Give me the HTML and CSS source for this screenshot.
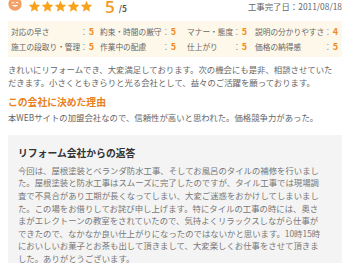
FILE: index.html
```html
<!DOCTYPE html>
<html lang="ja">
<head>
    <meta charset="UTF-8">
    <meta name="viewport" content="width=device-width, initial-scale=1.0">
    <title>口コミ</title>
    <link rel="stylesheet" href="styles.css">
</head>
<body>
    <div class="review">
        <div class="head">
            <div class="score">
                <svg class="face" viewBox="0 0 20 20">
                    <circle cx="10" cy="10" r="9.5" fill="#f3a066"/>
                    <path d="M5.5 8.2 Q7 6.6 8.5 8.2" stroke="#fff" stroke-width="1.4" fill="none" stroke-linecap="round"/>
                    <path d="M11.5 8.2 Q13 6.6 14.5 8.2" stroke="#fff" stroke-width="1.4" fill="none" stroke-linecap="round"/>
                    <path d="M5.5 11.5 Q10 16.5 14.5 11.5 Z" fill="#fff"/>
                </svg>
                <span class="stars">
                    <svg viewBox="0 0 24 24"><polygon points="12,1.5 15.1,8.3 22.5,9.1 17,14.1 18.6,21.5 12,17.7 5.4,21.5 7,14.1 1.5,9.1 8.9,8.3"/></svg>
                    <svg viewBox="0 0 24 24"><polygon points="12,1.5 15.1,8.3 22.5,9.1 17,14.1 18.6,21.5 12,17.7 5.4,21.5 7,14.1 1.5,9.1 8.9,8.3"/></svg>
                    <svg viewBox="0 0 24 24"><polygon points="12,1.5 15.1,8.3 22.5,9.1 17,14.1 18.6,21.5 12,17.7 5.4,21.5 7,14.1 1.5,9.1 8.9,8.3"/></svg>
                    <svg viewBox="0 0 24 24"><polygon points="12,1.5 15.1,8.3 22.5,9.1 17,14.1 18.6,21.5 12,17.7 5.4,21.5 7,14.1 1.5,9.1 8.9,8.3"/></svg>
                    <svg viewBox="0 0 24 24"><polygon points="12,1.5 15.1,8.3 22.5,9.1 17,14.1 18.6,21.5 12,17.7 5.4,21.5 7,14.1 1.5,9.1 8.9,8.3"/></svg>
                </span>
                <span class="num">5</span><span class="max">/5</span>
            </div>
            <div class="date">工事完了日：2011/08/18</div>
        </div>

        <div class="rates">
            <span class="lbl">対応の早さ</span><span class="val">：<b>5</b></span>
            <span class="lbl">約束・時間の厳守</span><span class="val">：<b>5</b></span>
            <span class="lbl">マナー・態度</span><span class="val">：<b>5</b></span>
            <span class="lbl">説明の分かりやすさ</span><span class="val">：<b>4</b></span>
            <span class="lbl">施工の段取り・管理</span><span class="val">：<b>5</b></span>
            <span class="lbl">作業中の配慮</span><span class="val">：<b>5</b></span>
            <span class="lbl">仕上がり</span><span class="val">：<b>5</b></span>
            <span class="lbl">価格の納得感</span><span class="val">：<b>5</b></span>
        </div>

        <p class="comment">きれいにリフォームでき、大変満足しております。次の機会にも是非、相談させていただきます。小さくともきらりと光る会社として、益々のご活躍を願っております。</p>

        <h3 class="reason-title">この会社に決めた理由</h3>
        <p class="reason">本WEBサイトの加盟会社なので、信頼性が高いと思われた。価格競争力があった。</p>

        <div class="reply">
            <h3>リフォーム会社からの返答</h3>
            <p>今回は、屋根塗装とベランダ防水工事、そしてお風呂のタイルの補修を行いました。屋根塗装と防水工事はスムーズに完了したのですが、タイル工事では現場調査で不具合があり工期が長くなってしまい、大変ご迷惑をおかけしてしまいました。この場をお借りしてお詫び申し上げます。特にタイルの工事の時には、奥さまがエレクトーンの教室をされていたので、気持よくリラックスしながら仕事ができたので、なかなか良い仕上がりになったのではないかと思います。10時15時においしいお菓子とお茶も出して頂きまして、大変楽しくお仕事をさせて頂きました。ありがとうございます。</p>
        </div>
    </div>
</body>
</html>
```

FILE: styles.css
```css
* {
    margin: 0;
    padding: 0;
    box-sizing: border-box;
}

body {
    font-family: 'Noto Sans CJK JP', 'Noto Sans', sans-serif;
    background: #fff;
    color: #666;
    font-size: 8.4px;
    line-height: 12.6px;
}

.review {
    width: 350px;
    padding: 0 8px;
}

/* 評価ヘッダー */
.head {
    display: flex;
    align-items: center;
    justify-content: space-between;
    height: 12px;
}

.score {
    display: flex;
    align-items: center;
}

.face {
    width: 14px;
    height: 14px;
    margin-top: -5px;
}

.stars {
    display: flex;
    margin-left: 6px;
}

.stars svg {
    width: 13px;
    height: 13px;
    fill: #f6a31d;
}

.num {
    margin-left: 12px;
    font-size: 17px;
    line-height: 13px;
    color: #f39a22;
    font-family: 'Open Sans', sans-serif;
    font-weight: 600;
}

.max {
    margin-left: 4px;
    margin-top: 4px;
    font-size: 8.4px;
    color: #555;
    font-weight: bold;
}

.date {
    color: #666;
}

/* 項目別評価 */
.rates {
    margin-top: 9px;
    background: #fef8ea;
    padding: 4px 0 4px 3px;
    display: grid;
    grid-template-columns: 69px 20px 62px 25px 46px 22px 69px 14px;
    row-gap: 2px;
    font-size: 7.7px;
    line-height: 13px;
}

.lbl {
    white-space: nowrap;
    color: #666;
}

.val {
    white-space: nowrap;
    color: #999;
}

.val b {
    color: #f08c1e;
    font-size: 9px;
    font-weight: bold;
    margin-left: 1px;
}

.comment {
    margin-top: 6px;
    width: 328px;
}

.reason-title {
    margin-top: 7px;
    color: #e8821e;
    font-size: 9.8px;
    line-height: 14px;
    font-weight: bold;
}

.reason {
    margin-top: 2px;
}

/* 返答 */
.reply {
    margin-top: 11px;
    background: #f4f4f4;
    padding: 11px 21px 10px 10px;
    width: 334px;
}

.reply h3 {
    color: #333;
    font-size: 9.8px;
    line-height: 14px;
    font-weight: bold;
    margin-bottom: 4px;
}

.reply p {
    color: #777;
}
```
